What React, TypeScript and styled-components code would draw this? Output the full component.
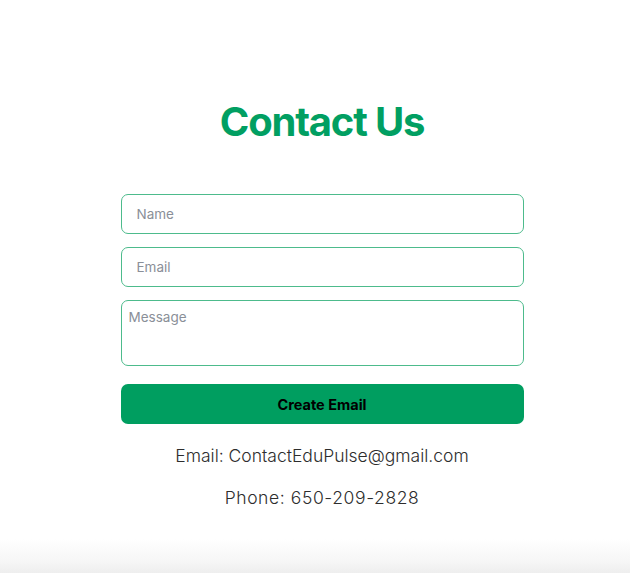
import React from "react";
import styled, { createGlobalStyle } from "styled-components";

const GlobalStyle = createGlobalStyle`
  html, body {
    margin: 0;
    padding: 0;
    background: #ffffff;
  }
  body {
    font-family: Inter, "Noto Sans", sans-serif;
  }
  * {
    box-sizing: border-box;
  }
`;

const Page = styled.main`
  min-height: 573px;
  display: flex;
  flex-direction: column;
  align-items: center;
  padding: 96px 0 0 14px;
  background: linear-gradient(
    180deg,
    #ffffff 0%,
    #ffffff 94%,
    #f6f6f6 98%,
    #eeeeee 100%
  );
`;

const Title = styled.h1`
  margin: 0;
  font-size: 40px;
  font-weight: 700;
  letter-spacing: -0.03em;
  line-height: 52px;
  color: #019f62;
`;

const Form = styled.form`
  width: 403px;
  margin-top: 46px;
  display: flex;
  flex-direction: column;
  gap: 13px;
`;

const Input = styled.input`
  height: 40px;
  padding: 0 15px;
  border: 1px solid #4dbb8c;
  border-radius: 7px;
  font-family: inherit;
  font-size: 13.5px;
  color: #222;
  outline: none;

  &::placeholder {
    color: #8a8f98;
  }
`;

const TextArea = styled.textarea`
  height: 66px;
  padding: 8px 7px;
  border: 1px solid #4dbb8c;
  border-radius: 7px;
  font-family: inherit;
  font-size: 13.5px;
  resize: none;
  outline: none;

  &::placeholder {
    color: #8a8f98;
  }
`;

const Button = styled.button`
  height: 40px;
  margin-top: 5px;
  border: none;
  border-radius: 7px;
  background: #009e60;
  color: #000;
  font-family: inherit;
  font-size: 14.5px;
  font-weight: 700;
  cursor: pointer;
`;

const Info = styled.p<{ $gap?: number; $spacing?: number }>`
  margin: ${(p) => p.$gap ?? 0}px 0 0;
  font-size: 17.5px;
  font-weight: 300;
  letter-spacing: ${(p) => p.$spacing ?? 0}px;
  color: #2d2d2d;
  line-height: 24px;
`;

export default function App() {
  return (
    <>
      <GlobalStyle />
      <Page>
        <Title>Contact Us</Title>
        <Form onSubmit={(e) => e.preventDefault()}>
          <Input type="text" placeholder="Name" />
          <Input type="email" placeholder="Email" />
          <TextArea placeholder="Message" />
          <Button type="submit">Create Email</Button>
        </Form>
        <Info $gap={20}>Email: ContactEduPulse@gmail.com</Info>
        <Info $gap={18} $spacing={0.6}>
          Phone: 650-209-2828
        </Info>
      </Page>
    </>
  );
}
